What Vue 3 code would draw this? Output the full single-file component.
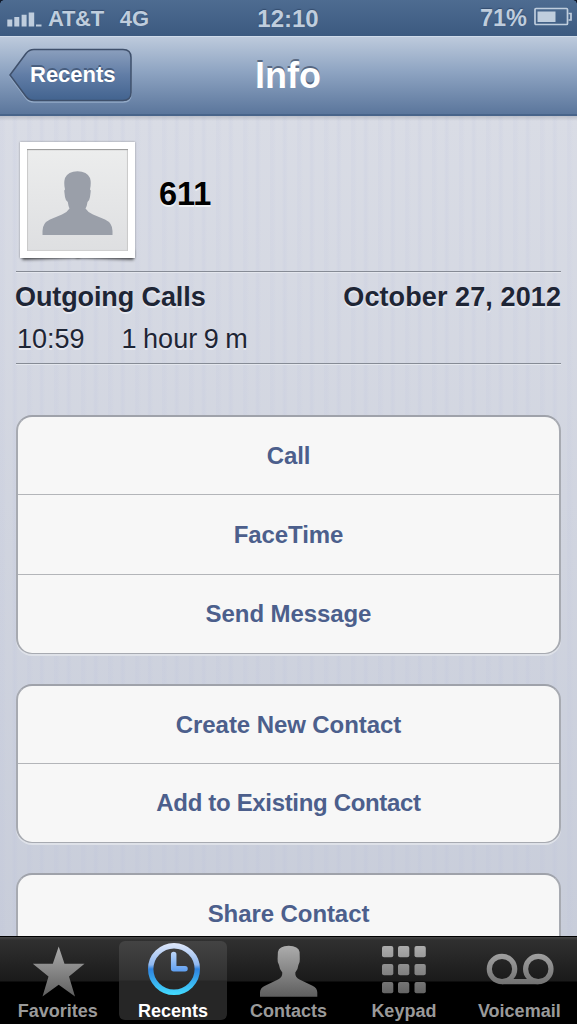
<template>
  <div class="screen">
    <header class="status-bar">
      <div class="carrier">
        <svg class="signal" width="35" height="17" viewBox="0 0 35 17">
          <path d="M0.300 9.500h5v7h-5zM7.300 7h5v9.500h-5zM14.600 4.700h5v11.800h-5zM21.700 2.500h5.500v14h-5.500zM29 14.500h5.500v2h-5.500z" fill="#bfcddd" />
        </svg>
        <span class="carrier-name">AT&amp;T</span>
        <span>4G</span>
      </div>
      <div class="time">12:10</div>
      <div class="power">
        <span class="percent">71%</span>
        <svg class="battery" width="39" height="20" viewBox="0 0 39 20">
          <rect x="1" y="1.500" width="32.500" height="16" rx="1" fill="none" stroke="#bfcddd" stroke-width="1.700" />
          <path d="M3.500 4.500h18v10.500h-18z" fill="#bfcddd" />
          <path d="M34.500 6.500h2.500v6.500h-2.500" fill="none" stroke="#bfcddd" stroke-width="1.700" />
        </svg>
      </div>
      <i class="corner left"></i>
      <i class="corner right"></i>
    </header>

    <nav class="nav-bar">
      <button class="back-btn">
        <svg class="back-shape" width="126" height="56" viewBox="0 0 126 56">
          <defs>
            <linearGradient id="back-fill" x1="0" y1="0" x2="0" y2="1">
              <stop offset="0" stop-color="#8b9fbd" />
              <stop offset="0.5" stop-color="#617da6" />
              <stop offset="1" stop-color="#42638f" />
            </linearGradient>
          </defs>
          <path :d="backPath" transform="translate(0 1.500)" fill="none" stroke="#94abc8" stroke-width="1.500" />
          <path :d="backPath" fill="url(#back-fill)" stroke="#3f506b" stroke-width="1.500" />
        </svg>
        <span class="back-label">Recents</span>
      </button>
      <h1 class="title">Info</h1>
    </nav>

    <main class="content">
      <section class="person">
        <div class="photo">
          <div class="photo-inner">
            <svg width="101" height="101" viewBox="27 149 101 101">
              <path d="M42.500 235V231Q42.500 223 50 219.500L62 214.500Q67 212.500 69.500 208.500Q68.300 206 67.800 202Q65.500 200.500 65 197L64.300 191.500Q64 190 65 189.500Q63.500 183 65 178Q68 171.500 77.500 171.300Q87 171.500 90 178Q91.500 183 90 189.500Q91 190 90.700 191.500L90 197Q89.500 200.500 87.500 202Q87 206 85.500 208.500Q88 212.500 93 214.500L105 219.500Q112.500 223 112.500 231V235Z" fill="#9a9fa9" />
            </svg>
          </div>
        </div>
        <h2 class="name">611</h2>
      </section>

      <section class="call-log">
        <div class="log-header">
          <span class="log-type">Outgoing Calls</span>
          <span class="log-date">October 27, 2012</span>
        </div>
        <div class="log-row">
          <span class="log-time">10:59</span>
          <span class="log-duration">1 hour 9 m</span>
        </div>
      </section>

      <div v-for="(group, index) in groups" :key="index" class="group">
        <button
          v-for="action in group"
          :key="action"
          class="action"
          :class="{ long: action.length > 20 }"
        >
          {{ action }}
        </button>
      </div>
    </main>

    <footer class="tab-bar">
      <button
        v-for="tab in tabs"
        :key="tab.name"
        class="tab"
        :class="{ active: tab.name === activeTab }"
        @click="activeTab = tab.name"
      >
        <svg class="tab-icon" width="108" height="60" :viewBox="tab.viewBox">
          <defs>
            <linearGradient id="tab-grey" gradientUnits="userSpaceOnUse" x1="0" y1="946" x2="0" y2="997">
              <stop offset="0" stop-color="#acacac" />
              <stop offset="1" stop-color="#5e5e5e" />
            </linearGradient>
            <linearGradient id="tab-blue" gradientUnits="userSpaceOnUse" x1="0" y1="943" x2="0" y2="995">
              <stop offset="0" stop-color="#e1e9fa" />
              <stop offset="0.42" stop-color="#8fb8f0" />
              <stop offset="0.5" stop-color="#2f83df" />
              <stop offset="1" stop-color="#43dcff" />
            </linearGradient>
            <linearGradient id="tab-hands" gradientUnits="userSpaceOnUse" x1="0" y1="951" x2="0" y2="972">
              <stop offset="0" stop-color="#c1d8f8" />
              <stop offset="1" stop-color="#5b9df0" />
            </linearGradient>
          </defs>
          <path
            v-if="tab.name === 'Favorites'"
            d="M58.700 946.500L64.500 963.800H84.500L69 976.500L75 996.500L58.700 984.700L42.500 996.500L48.500 976.500L32.800 963.800H52.800Z"
            fill="url(#tab-grey)"
          />
          <g v-else-if="tab.name === 'Recents'" fill="none">
            <circle cx="174" cy="969" r="23.300" stroke="url(#tab-blue)" stroke-width="5.400" />
            <path d="M173.700 954.500V968.700H185" stroke="url(#tab-hands)" stroke-width="5.500" stroke-linecap="round" stroke-linejoin="round" />
          </g>
          <path
            v-else-if="tab.name === 'Contacts'"
            d="M260 996.700V992.500Q260 988 265 985.700L278 979.500Q282.500 977.500 282.300 972.500Q279.500 969.500 279 965Q277.300 962.500 277.600 959L277.900 952Q279 946 288.700 945.800Q298.500 946 299.600 952L299.800 959Q300 962.500 298.400 965Q298 969.500 295.300 972.500Q295 977.500 299.500 979.500L312.500 985.700Q317.300 988 317.300 992.500V996.700Z"
            fill="url(#tab-grey)"
          />
          <g v-else-if="tab.name === 'Keypad'" fill="url(#tab-grey)">
            <template v-for="y in [946, 964, 982]" :key="y">
              <rect v-for="x in [382, 398, 414.500]" :key="x" :x="x" :y="y" width="11.300" height="11.300" rx="2" />
            </template>
          </g>
          <g v-else fill="none" stroke="url(#tab-grey)" stroke-width="5.200">
            <circle cx="502" cy="969" r="12.700" />
            <circle cx="538.300" cy="969" r="12.700" />
            <path d="M502 981.600L538.300 981.700" />
          </g>
        </svg>
        <span class="tab-label">{{ tab.name }}</span>
      </button>
    </footer>
  </div>
</template>

<script setup>
import { ref } from 'vue'

const activeTab = ref('Recents')

const backPath = 'M2 27L18 5.500Q21 1.500 26 1.500H115Q123 1.500 123 9.500V44.500Q123 52.500 115 52.500H26Q21 52.500 18 48.500Z'

const groups = [
  ['Call', 'FaceTime', 'Send Message'],
  ['Create New Contact', 'Add to Existing Contact'],
  ['Share Contact']
]

const tabs = [
  { name: 'Favorites', viewBox: '4 940 108 60' },
  { name: 'Recents', viewBox: '119 940 108 60' },
  { name: 'Contacts', viewBox: '234 940 108 60' },
  { name: 'Keypad', viewBox: '350 940 108 60' },
  { name: 'Voicemail', viewBox: '465 940 108 60' }
]
</script>

<style>
body {
  background: #000;
}
</style>

<style scoped>
.screen {
  display: flex;
  flex-direction: column;
  width: 577px;
  height: 1024px;
  overflow: hidden;
  font-family: "Liberation Sans", Arial, sans-serif;
}

button {
  margin: 0;
  padding: 0;
  border: none;
  background: none;
  font-family: inherit;
  cursor: pointer;
}

.status-bar {
  position: relative;
  flex: none;
  display: grid;
  grid-template-columns: 1fr auto 1fr;
  align-items: center;
  height: 36px;
  padding: 1px 5px 0 7px;
  box-sizing: border-box;
  background: linear-gradient(#4e6c91, #3c5a80);
  color: #bfcddd;
  font-size: 22px;
  line-height: 35px;
  font-weight: bold;
  text-shadow: 0 -1px 1px rgba(30, 50, 80, 0.5);
}

.carrier,
.power {
  display: flex;
  align-items: center;
}

.carrier-name {
  margin: 0 16px 0 6px;
  letter-spacing: -0.3px;
}

.time {
  margin-right: 3px;
  font-size: 24px;
}

.power {
  justify-content: flex-end;
}

.percent {
  font-size: 23.5px;
}

.battery {
  margin: -3px -1px 0 7px;
}

.corner {
  position: absolute;
  top: 0;
  width: 4px;
  height: 4px;
}

.corner.left {
  left: 0;
  background: radial-gradient(circle at 100% 100%, transparent 3.5px, #101828 4px);
}

.corner.right {
  right: 0;
  background: radial-gradient(circle at 0 100%, transparent 3.5px, #101828 4px);
}

.nav-bar {
  flex: none;
  display: grid;
  grid-template-columns: 1fr auto 1fr;
  align-items: start;
  height: 80px;
  padding: 0 9px 0 8px;
  box-sizing: border-box;
  border-top: 1px solid #cfdbea;
  border-bottom: 2px solid #48648a;
  background: linear-gradient(#bdcadc, #8ea4c2 45%, #5b769c);
}

.back-btn {
  display: grid;
  width: 126px;
  margin-top: 11px;
}

.back-shape,
.back-label {
  grid-area: 1 / 1;
}

.back-label {
  padding: 0 0 0 22px;
  color: #fff;
  font-size: 22px;
  line-height: 54px;
  font-weight: bold;
  text-align: left;
  text-shadow: 0 -2px 0 rgba(50, 70, 100, 0.65);
}

.title {
  margin: 0;
  color: #fff;
  font-size: 36px;
  line-height: 77px;
  text-shadow: 0 -2px 0 rgba(60, 75, 100, 0.7);
}

.content {
  flex: 1;
  min-height: 0;
  overflow: hidden;
  padding: 26px 16px 0;
  background:
    linear-gradient(rgba(120, 125, 140, 0.3), transparent 5px),
    repeating-linear-gradient(90deg, rgba(175, 182, 220, 0.08) 0 3px, transparent 6px 12px, rgba(175, 182, 220, 0.11) 14px 15px, transparent 18px 27px),
    linear-gradient(#d9dce5, #c8cdda);
}

.person {
  display: flex;
  align-items: center;
  height: 129px;
  border-bottom: 1px solid #868b95;
  box-shadow: 0 1px 0 #e4e7ee;
  isolation: isolate;
}

.photo {
  position: relative;
  align-self: flex-start;
  padding: 7px;
  margin-left: 4px;
  background: #fff;
  box-shadow: 0 0 2px rgba(0, 0, 0, 0.35);
}

/* curled corners under the frame */
.photo::before,
.photo::after {
  content: "";
  position: absolute;
  z-index: -1;
  bottom: 3px;
  width: 50%;
  height: 10px;
  box-shadow: 0 4px 3px rgba(0, 0, 0, 0.6);
}

.photo::before {
  left: 2px;
  transform: rotate(-2deg);
}

.photo::after {
  right: 2px;
  transform: rotate(2deg);
}

.photo-inner {
  width: 101px;
  height: 102px;
  background: linear-gradient(#eceded, #dedfe1);
  box-shadow: inset 0 1px 1px #999, inset 0 0 1px 1px #cfcfcf;
}

.name {
  margin: -25px 0 0 24px;
  color: #000;
  font-size: 32.5px;
  line-height: 36px;
  text-shadow: 0 2px 0 #eff1f5;
}

.call-log {
  height: 91px;
  margin-bottom: 51px;
  border-bottom: 1px solid #868b95;
  box-shadow: 0 1px 0 #e4e7ee;
  color: #1e2535;
  font-size: 27px;
  text-shadow: 0 2px 0 rgba(240, 242, 247, 0.7);
}

.log-header {
  display: flex;
  justify-content: space-between;
  padding-top: 5px;
  line-height: 40px;
  font-weight: bold;
}

.log-type {
  margin-left: -1px;
  letter-spacing: -0.1px;
}

.log-date {
  letter-spacing: 0.1px;
}

.log-row {
  display: flex;
  gap: 37px;
  padding: 1px 0 0 1px;
  line-height: 42px;
}

.log-duration {
  word-spacing: -1px;
}

.group {
  margin-bottom: 30px;
  border: 2px solid #a7aab1;
  border-top-color: #9fa2aa;
  border-bottom-width: 1px;
  border-radius: 16px;
  background: #f7f7f7;
  box-shadow: 0 2px 0 #dee1e8;
  overflow: hidden;
}

.action {
  display: block;
  width: 100%;
  height: 77px;
  color: #4c5f8c;
  font-size: 24px;
  line-height: 78px;
  font-weight: bold;
  letter-spacing: -0.08px;
}

.action + .action {
  height: 80px;
  border-top: 1px solid #b3b5b9;
}

.action + .action:last-child {
  height: 79px;
}

.action.long {
  letter-spacing: -0.33px;
}

.tab-bar {
  flex: none;
  display: grid;
  grid-template-columns: repeat(5, 1fr);
  height: 88px;
  box-sizing: border-box;
  border-top: 1px solid #000;
  background: linear-gradient(#484848 0, #303030 3px, #1a1a1a 44px, #000 45px);
}

.tab {
  display: flex;
  flex-direction: column;
  align-items: center;
  justify-self: center;
  width: 108px;
  height: 79px;
  margin-top: 4px;
  border-radius: 6px;
  color: #9a9a9a;
  font-size: 18px;
  font-weight: bold;
}

.tab.active {
  background: linear-gradient(#434343, #303030 39px, #262626 40px);
  color: #fff;
}

.tab-icon {
  flex: none;
  margin-top: -1px;
}

.tab-label {
  line-height: 22px;
}
</style>
